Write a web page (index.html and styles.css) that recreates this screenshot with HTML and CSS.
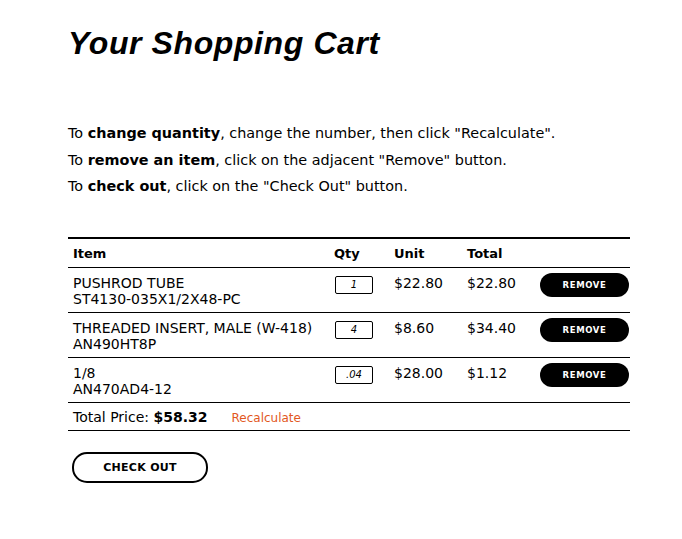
FILE: index.html
```html
<!DOCTYPE html>
<html>
<head>
<meta charset="utf-8">
<link rel="stylesheet" href="styles.css">
</head>
<body>
<div class="page">
  <h1 class="title">Your Shopping Cart</h1>
  <div class="help">
    <p>To <b>change quantity</b>, change the number, then click "Recalculate".</p>
    <p>To <b>remove an item</b>, click on the adjacent "Remove" button.</p>
    <p>To <b>check out</b>, click on the "Check Out" button.</p>
  </div>
  <table class="cart">
    <thead>
      <tr><th class="c-item">Item</th><th class="c-qty">Qty</th><th class="c-unit">Unit</th><th class="c-total">Total</th><th class="c-act"></th></tr>
    </thead>
    <tbody>
      <tr>
        <td class="c-item">PUSHROD TUBE<br>ST4130-035X1/2X48-PC</td>
        <td class="c-qty"><span class="qty">1</span></td>
        <td class="c-unit">$22.80</td>
        <td class="c-total">$22.80</td>
        <td class="c-act"><span class="remove">REMOVE</span></td>
      </tr>
      <tr>
        <td class="c-item">THREADED INSERT, MALE (W-418)<br>AN490HT8P</td>
        <td class="c-qty"><span class="qty">4</span></td>
        <td class="c-unit">$8.60</td>
        <td class="c-total">$34.40</td>
        <td class="c-act"><span class="remove">REMOVE</span></td>
      </tr>
      <tr>
        <td class="c-item">1/8<br>AN470AD4-12</td>
        <td class="c-qty"><span class="qty">.04</span></td>
        <td class="c-unit">$28.00</td>
        <td class="c-total">$1.12</td>
        <td class="c-act"><span class="remove">REMOVE</span></td>
      </tr>
    </tbody>
    <tfoot>
      <tr><td colspan="5" class="sum">Total Price: <b>$58.32</b><span class="recalc">Recalculate</span></td></tr>
    </tfoot>
  </table>
  <div class="checkout-wrap"><span class="checkout">CHECK OUT</span></div>
</div>
</body>
</html>
```
FILE: styles.css
```css
html, body { margin: 0; padding: 0; background: #fff; }
body { font-family: "DejaVu Sans", sans-serif; color: #000; }
.page { padding: 26px 52px 0 68px; }
.title { margin: 0; font-family: "Liberation Sans", Arial, sans-serif; font-size: 32px; font-weight: bold; font-style: italic; line-height: 34px; letter-spacing: 0.6px; }
.help { margin-top: 60px; font-size: 14.4px; }
.help p { margin: 0; line-height: 26.5px; }
.cart { margin-top: 37px; width: 562px; border-collapse: collapse; font-size: 14px; }
.cart thead tr { border-top: 2px solid #000; border-bottom: 1px solid #000; }
.cart th { text-align: left; font-weight: bold; height: 27px; padding: 1px 0 0 0; vertical-align: middle; font-size: 13px; }
.cart tbody tr { border-bottom: 1px solid #000; }
.cart td { vertical-align: top; padding: 7px 0 5px 0; line-height: 16px; }
.c-item { padding-left: 5px !important; width: 261px; }
.c-qty { width: 60px; }
.c-unit { width: 73px; }
.c-total { width: 73px; }
.c-act { text-align: right; padding-right: 1px !important; }
.qty { display: inline-block; vertical-align: top; width: 36px; height: 16px; margin-top: 1px; border: 1px solid #000; border-radius: 2px; font-size: 10px; font-style: italic; text-align: center; line-height: 16px; margin-left: 1px; }
.remove { display: inline-block; vertical-align: top; width: 89px; height: 24px; margin-top: -2px; background: #000; color: #fff; border-radius: 12px; font-size: 8.5px; font-weight: bold; letter-spacing: 0.6px; text-align: center; line-height: 24px; }
.cart tfoot tr { border-bottom: 1px solid #000; }
.cart td.sum { padding: 6px 0 4px 5px; line-height: 16px; }
.sum b { font-weight: bold; font-size: 14px; }
.recalc { color: #e2581e; font-size: 12px; margin-left: 24px; }
.checkout-wrap { margin-top: 21px; padding-left: 4px; }
.checkout { display: inline-block; width: 132px; height: 27px; border: 2px solid #000; border-radius: 15px; text-align: center; line-height: 27px; font-size: 11px; font-weight: bold; letter-spacing: 0.3px; }
```
